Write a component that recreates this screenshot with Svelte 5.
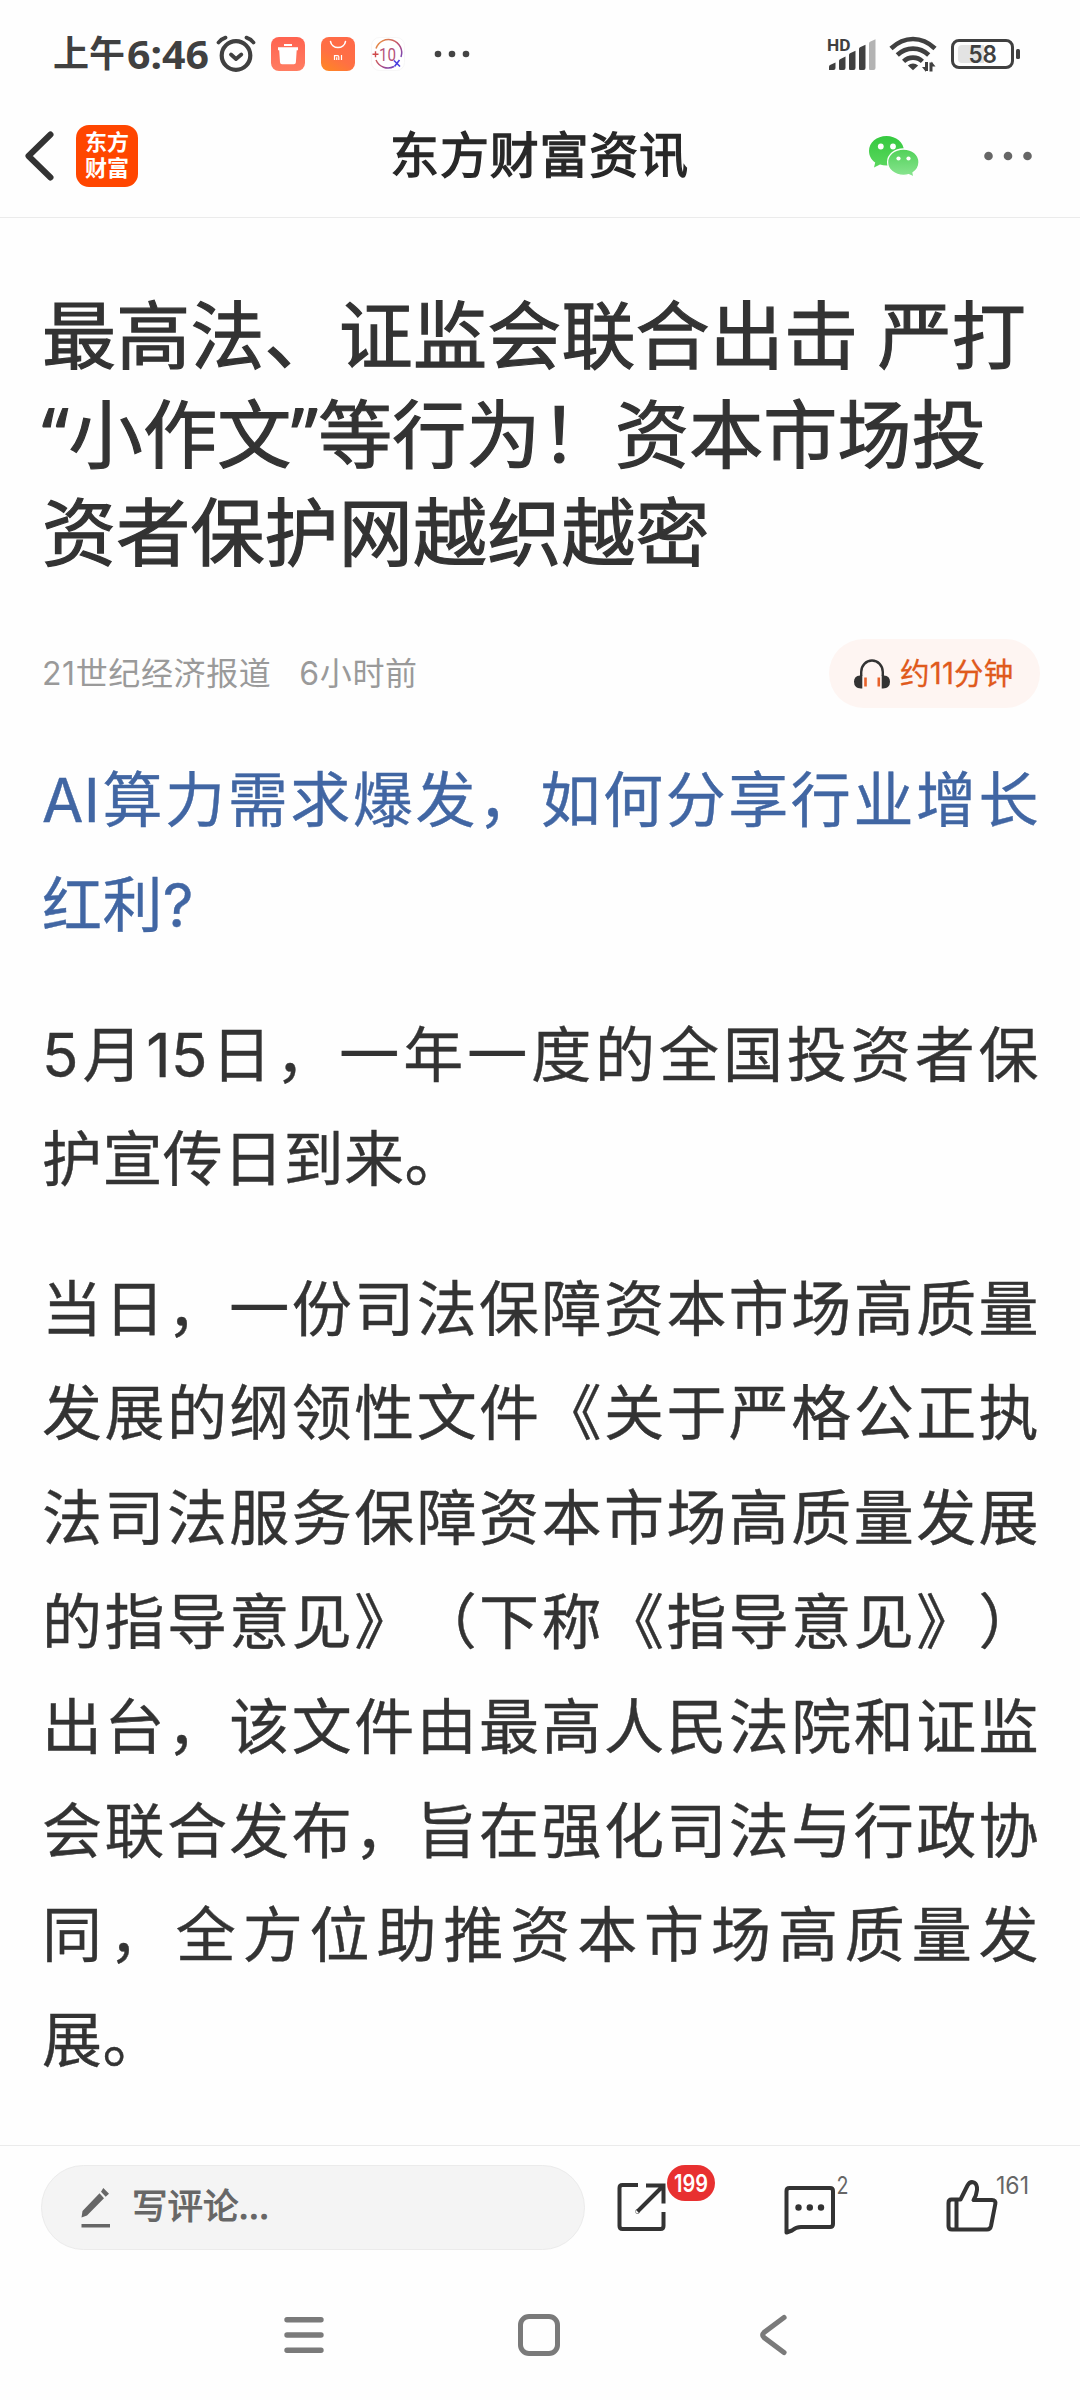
<script>
  const headline = [
    '最高法、证监会联合出击 严打',
    '“小作文”等行为！资本市场投',
    '资者保护网越织越密'
  ];

  const paragraphs = [
    { link: true, lines: ['AI算力需求爆发，如何分享行业增长', '红利?'] },
    { link: false, lines: ['5月15日，一年一度的全国投资者保', '护宣传日到来。'] },
    {
      link: false,
      lines: [
        '当日，一份司法保障资本市场高质量',
        '发展的纲领性文件《关于严格公正执',
        '法司法服务保障资本市场高质量发展',
        '的指导意见》（下称《指导意见》）',
        '出台，该文件由最高人民法院和证监',
        '会联合发布，旨在强化司法与行政协',
        '同，全方位助推资本市场高质量发',
        '展。'
      ]
    }
  ];
</script>

<div class="screen">
  <div class="status">
    <div class="status-left">
      <span class="ampm">上午</span>
      <svg class="clock" width="84" height="40" viewBox="0 0 84 40">
        <text x="0" y="34.5" textLength="82" lengthAdjust="spacingAndGlyphs">6:46</text>
      </svg>
      <svg class="alarm" width="40" height="40" viewBox="0 0 40 40" fill="none" stroke="#404040" stroke-linecap="round" stroke-linejoin="round">
        <circle cx="20" cy="21.5" r="14.3" stroke-width="4.2" />
        <path d="M2.5 8.5 Q5 5 9.5 3.6M37.5 8.5 Q35 5 30.5 3.6" stroke-width="3.8" />
        <path d="M15 20.5l5 4.5 5.3-4.5" stroke-width="3.8" />
      </svg>
      <svg class="app" width="34" height="34" viewBox="0 0 34 34">
        <defs>
          <linearGradient id="trash" x1="0" y1="0" x2="0" y2="1"><stop offset="0" stop-color="#ff6350" /><stop offset="1" stop-color="#ff7d62" /></linearGradient>
        </defs>
        <rect width="34" height="34" rx="8" fill="url(#trash)" />
        <path d="M13 7h8v2h-8zM7 10.3h20v3h-1.300l-.8 12q-.1 2-2 2H11q-1.900 0-2-2l-.8-12H7z" fill="#fff" />
      </svg>
      <svg class="app" width="34" height="34" viewBox="0 0 34 34">
        <defs>
          <linearGradient id="store" x1="0" y1="1" x2=".6" y2="0"><stop offset="0" stop-color="#ff8a1f" /><stop offset=".5" stop-color="#ff7043" /><stop offset="1" stop-color="#ff6a48" /></linearGradient>
        </defs>
        <rect width="34" height="34" rx="8" fill="url(#store)" />
        <path d="M9.500 4.500a7.600 7.300 0 0 0 15 0" fill="none" stroke="#fff" stroke-width="1.500" stroke-linecap="round" />
        <path d="M13.500 23v-4.300h3q1.300 0 1.300 1.300v3M15.700 20.300v2.700M20.500 18v5" fill="none" stroke="#fff" stroke-width="1.200" />
      </svg>
      <svg class="app" width="34" height="34" viewBox="0 0 34 34">
        <defs>
          <linearGradient id="ring" x1="0" y1="0" x2="1" y2="1"><stop offset="0" stop-color="#ef9a3d" /><stop offset=".5" stop-color="#c0506f" /><stop offset="1" stop-color="#4a3fe0" /></linearGradient>
        </defs>
        <rect x=".5" y=".5" width="33" height="33" rx="8" fill="#fff" stroke="#f7f7f7" />
        <path d="M5 11.500A13 13 0 0 1 30 20M5 23A13 13 0 0 0 23 29.500" fill="none" stroke="url(#ring)" stroke-width="1.500" />
        <path d="M1.500 17.300h6M4.500 14.300v6" stroke="#cf4a4a" stroke-width="1.400" />
        <text class="ten" x="8" y="24" textLength="17" lengthAdjust="spacingAndGlyphs">10</text>
        <path d="M23 23.500l6 6M28.500 23l-5 6.500" stroke="#4a3fe0" stroke-width="1.600" />
      </svg>
      <svg class="more-notes" width="36" height="8" viewBox="0 0 36 8" fill="#444">
        <circle cx="4" cy="4" r="3.300" /><circle cx="18" cy="4" r="3.300" /><circle cx="32" cy="4" r="3.300" />
      </svg>
    </div>
    <div class="status-right">
      <svg width="50" height="36" viewBox="0 0 50 36" fill="#404040">
        <text class="hd" x="0" y="14.500" textLength="23.500" lengthAdjust="spacingAndGlyphs">HD</text>
        <path d="M2 34v-3.500q0-1 1-1.600L8.500 26.500V32q0 2-2 2z" />
        <path d="M13 34q-1 0-1-1.500V25q0-1 1-1.800L18.500 20.500V32q0 2-2 2z" />
        <path d="M23 34q-1 0-1-1.500V19q0-1 1-1.800L28.500 14.800V32q0 2-2 2z" />
        <path d="M33 34q-1 0-1-1.500V13q0-1 1-1.800L38.500 8.800V32q0 2-2 2z" />
        <path d="M43 34q-1 0-1-1.500V7.500q0-1 1-1.800L48.500 3.300V32q0 2-2 2z" fill="#b3b3b3" />
      </svg>
      <svg class="wifi" width="48" height="38" viewBox="0 0 48 38" fill="none" stroke="#404040" stroke-width="4.600">
        <path d="M2 13.500Q12 4 24 4T46 13.500M8.300 20Q15 13.600 24 13.600T39.700 20M14.600 26.300Q18.500 22.600 24 22.600T33.400 26.300" />
        <path d="M18.800 30.500q5.200-4 10.400 0L24 35.200z" fill="#404040" stroke="none" />
        <path d="M37.500 27v9M42 36.500v-9" stroke-width="3" />
        <path d="M33 32h4v5zM46.500 31.500h-4v-5z" fill="#404040" stroke="none" />
      </svg>
      <svg class="battery" width="70" height="32" viewBox="0 0 70 32">
        <path d="M11 7h22v18H11q-4 0-4-4V11q0-4 4-4z" fill="#e3e3e3" />
        <rect x="1.500" y="2.500" width="60" height="27" rx="6.500" fill="none" stroke="#404040" stroke-width="3" />
        <rect x="65" y="11" width="4" height="10" rx="1.500" fill="#404040" />
        <text class="charge" x="17.500" y="25" textLength="28.500" lengthAdjust="spacingAndGlyphs">58</text>
      </svg>
    </div>
  </div>

  <header>
    <div class="head-left">
      <svg width="34" height="54" viewBox="0 0 34 54" fill="none" stroke="#333" stroke-width="6" stroke-linecap="round" stroke-linejoin="round">
        <path d="M28.500 5.500L6.500 27l22 21.500" />
      </svg>
      <div class="logo"><span>东方</span><span>财富</span></div>
    </div>
    <div class="head-title">东方财富资讯</div>
    <div class="head-right">
      <svg width="52" height="42" viewBox="0 0 52 42">
        <defs>
          <linearGradient id="bubbleA" x1="0" y1="0" x2="0" y2="1"><stop offset="0" stop-color="#35c93f" /><stop offset="1" stop-color="#5bd75f" /></linearGradient>
          <linearGradient id="bubbleB" x1="0" y1="0" x2="0" y2="1"><stop offset="0" stop-color="#50d158" /><stop offset="1" stop-color="#8be592" /></linearGradient>
        </defs>
        <path d="M18.500 1C8.700 1 1 7.400 1 16c0 4.800 2.400 8.700 6.200 11.500L6 32.500l6-3q3 1 6.500 1C28 30.500 36 24.500 36 16S28 1 18.500 1z" fill="url(#bubbleA)" />
        <path d="M35.500 14C26.500 14 19.600 19.800 19.600 27.200S26.500 40.400 35.500 40.400q3 0 5.300-.7L46 42l-1-4.300c3.700-2.500 6-6.200 6-10.500C51 19.800 44.500 14 35.500 14z" fill="url(#bubbleB)" stroke="#fff" stroke-width="1.300" />
        <g fill="#fff">
          <circle cx="12.800" cy="11.500" r="2.900" /><circle cx="25" cy="11.500" r="2.900" />
          <circle cx="30.500" cy="23.500" r="2.100" /><circle cx="40.500" cy="23.500" r="2.100" />
        </g>
      </svg>
      <svg class="head-more" width="48" height="10" viewBox="0 0 48 10" fill="#666">
        <circle cx="4.500" cy="5" r="4.300" /><circle cx="24" cy="5" r="4.300" /><circle cx="43.500" cy="5" r="4.300" />
      </svg>
    </div>
  </header>

  <main>
    <h1>
      {#each headline as line}
        <span>{line}</span>
      {/each}
    </h1>

    <div class="meta">
      <span class="source">21世纪经济报道</span>
      <span class="time">6小时前</span>
      <div class="listen">
        <svg width="36" height="30" viewBox="0 0 36 30">
          <path d="M7.200 17V13a10.800 11.500 0 0 1 21.600 0V17" fill="none" stroke="#333" stroke-width="2.400" />
          <path d="M8.300 16.500v13H7Q0 29 0 22.700 0 17 6 16.500zM27.700 16.500v13H29q7-.5 7-6.800 0-5.700-6-6.200z" fill="#333" />
          <path d="M11.500 18.500v9M24.800 18.500v9" stroke="#e8622a" stroke-width="2.600" />
        </svg>
        <span>约11分钟</span>
      </div>
    </div>

    {#each paragraphs as paragraph}
      <p class:link={paragraph.link}>
        {#each paragraph.lines as line, i}
          <span class:full={i < paragraph.lines.length - 1}>{line}</span>
        {/each}
      </p>
    {/each}
  </main>

  <footer>
    <div class="comment-box">
      <svg width="30" height="42" viewBox="0 0 30 42" fill="#666">
        <path d="M.5 30.500L1.500 24 18.500 6.200l4.500 5L6 28.500zM20 4.700L22.300 1l5.700 5.700-3.300 3z" />
        <rect x=".5" y="37" width="28.500" height="3.500" />
      </svg>
      <span>写评论...</span>
    </div>
    <div class="action share">
      <svg width="50" height="50" viewBox="0 0 50 50" fill="none" stroke="#333" stroke-width="4">
        <path d="M21 3H5.500Q2.500 3 2.500 6v38q0 3 3 3h38q3 0 3-3V30" />
        <path d="M29 3.500h17.500V21.500M45 5L20.500 29.500" />
        <circle cx="20.500" cy="29.500" r=".2" stroke-linecap="round" />
      </svg>
      <div class="badge">
        <svg width="34" height="20" viewBox="0 0 34 20"><text x="0" y="19" textLength="34" lengthAdjust="spacingAndGlyphs">199</text></svg>
      </div>
    </div>
    <div class="action replies">
      <svg width="52" height="50" viewBox="0 0 52 50" fill="none" stroke="#333" stroke-width="4" stroke-linejoin="round">
        <path d="M5.500 3h40.500Q49 3 49 6v33q0 3-3 3H17Q12 42 8 45.500L2.500 47.500V6q0-3 3-3z" />
        <g fill="#333" stroke="none"><circle cx="14.500" cy="22.500" r="3.200" /><circle cx="25.800" cy="22.500" r="3.200" /><circle cx="37" cy="22.500" r="3.200" /></g>
      </svg>
      <svg class="count" width="11" height="20" viewBox="0 0 11 20"><text x="-.5" y="19" textLength="12" lengthAdjust="spacingAndGlyphs">2</text></svg>
    </div>
    <div class="action likes">
      <svg width="52" height="54" viewBox="0 0 52 54" fill="none" stroke="#333" stroke-width="4" stroke-linejoin="round">
        <path d="M5.500 20.500h9L21.500 6.500Q24 2 28 3.500 31.500 5.500 31 11q-.5 5.500-3.500 10H46Q50 21 49.300 25L45 47q-.8 3.500-4 3.500H6Q2.500 50.500 2.500 47V24q0-3.500 3-3.500zM10.500 20.500v30" />
      </svg>
      <svg class="count" width="32" height="20" viewBox="0 0 32 20"><text x="-2" y="19" textLength="33" lengthAdjust="spacingAndGlyphs">161</text></svg>
    </div>
  </footer>

  <nav>
    <svg width="42" height="44" viewBox="0 0 42 44" fill="none" stroke="#7a7a7a" stroke-width="5.400" stroke-linecap="round">
      <path d="M4 6.700h34M4 22h34M4 37.300h34" />
    </svg>
    <svg class="home" width="44" height="44" viewBox="0 0 44 44" fill="none" stroke="#7a7a7a" stroke-width="5">
      <rect x="3.500" y="3.500" width="37" height="37" rx="8.500" />
    </svg>
    <svg class="back" width="30" height="44" viewBox="0 0 30 44" fill="none" stroke="#7a7a7a" stroke-width="5.200" stroke-linecap="round">
      <path d="M26 4.500L6 19.500q-2.600 2.500 0 5L26 39.500" />
    </svg>
  </nav>
</div>

<style>
  :global(body) {
    margin: 0;
    background: #fefefe;
  }

  .screen {
    width: 1080px;
    height: 2400px;
    overflow: hidden;
    display: flex;
    flex-direction: column;
    background: #fefefe;
    font-family: Inter, 'Noto Sans CJK SC', sans-serif;
    color: #333;
    text-spacing-trim: space-all;
  }

  svg {
    display: block;
    flex: none;
    overflow: visible;
  }

  .status {
    height: 108px;
    box-sizing: border-box;
    padding: 0 59px 0 53px;
    display: flex;
    align-items: center;
    justify-content: space-between;
    flex: none;
  }

  .status-left,
  .status-right {
    display: flex;
    align-items: center;
  }

  .ampm {
    width: 74px;
    font-size: 36px;
    line-height: 40px;
    font-weight: 700;
    color: #404040;
    white-space: nowrap;
  }

  .clock text {
    font: 700 40px 'Noto Sans', sans-serif;
    fill: #404040;
  }

  .alarm {
    margin-left: 5px;
  }

  .app {
    margin-left: 16px;
  }

  .alarm + .app {
    margin-left: 15px;
  }

  .ten {
    font: 400 18px Roboto, sans-serif;
    fill: #b5527a;
  }

  .more-notes {
    margin-left: 29px;
  }

  .hd {
    font: 700 17px Roboto, sans-serif;
  }

  .wifi {
    margin-left: 12px;
  }

  .battery {
    margin-left: 14px;
  }

  .charge {
    font: 600 24px Inter, sans-serif;
    fill: #404040;
  }

  header {
    height: 110px;
    box-sizing: border-box;
    padding: 0 48px 14px 22px;
    border-bottom: 1px solid #ebebeb;
    display: grid;
    grid-template-columns: 1fr auto 1fr;
    align-items: center;
    flex: none;
  }

  .head-left,
  .head-right {
    display: flex;
    align-items: center;
  }

  .head-left {
    gap: 20px;
  }

  .head-right {
    justify-content: flex-end;
  }

  .head-more {
    margin-left: 64px;
  }

  .logo {
    width: 62px;
    height: 62px;
    border-radius: 13px;
    background: #ff4600;
    color: #fff;
    font-size: 22px;
    font-weight: 700;
    line-height: 26px;
    padding-bottom: 1px;
    box-sizing: border-box;
    display: flex;
    flex-direction: column;
    align-items: center;
    justify-content: center;
  }

  .head-title {
    padding-left: 25px;
    font-size: 49px;
    letter-spacing: 0.8px;
    line-height: 60px;
    color: #282828;
    -webkit-text-stroke: 1.4px #282828;
  }

  main {
    flex: 1;
    box-sizing: border-box;
    padding: 68px 40px 0 42px;
    overflow: hidden;
  }

  h1 {
    margin: 0;
    font-family: 'Noto Sans', 'Noto Sans CJK SC', sans-serif;
    font-size: 74px;
    font-weight: 400;
    line-height: 98.7px;
    letter-spacing: 0.2px;
    -webkit-text-stroke: 1.2px #333;
  }

  h1 span,
  p span {
    display: block;
    white-space: nowrap;
  }

  .meta {
    height: 69px;
    margin-top: 57px;
    display: flex;
    align-items: center;
    font-size: 32px;
    letter-spacing: 0.6px;
    color: #9a9a9a;
  }

  .source,
  .time {
    padding-bottom: 6px;
  }

  .time {
    margin-left: 28px;
  }

  .listen {
    width: 211px;
    height: 69px;
    box-sizing: border-box;
    padding-left: 25px;
    margin-left: auto;
    border-radius: 35px;
    background: #fef5f2;
    display: flex;
    align-items: center;
    gap: 10px;
    font-size: 29.500px;
    letter-spacing: 0.2px;
    color: #e05a1c;
    white-space: nowrap;
    -webkit-text-stroke: 0.3px #e05a1c;
  }

  .listen span {
    padding-bottom: 5px;
  }

  p {
    width: 997px;
    margin: 0 0 45.6px;
    font-size: 60px;
    line-height: 104.400px;
    letter-spacing: 0.4px;
    -webkit-text-stroke: 0.4px currentColor;
  }

  .meta + p {
    margin-top: 40px;
  }

  .link {
    color: #4166a3;
  }

  .full {
    white-space: normal;
    text-align: justify;
    text-align-last: justify;
  }

  footer {
    height: 125px;
    box-sizing: border-box;
    border-top: 1px solid #ebebeb;
    padding: 19px 0 0 41px;
    display: flex;
    align-items: flex-start;
    flex: none;
  }

  .comment-box {
    width: 544px;
    height: 85px;
    box-sizing: border-box;
    padding-left: 39px;
    border: 1px solid #ebebeb;
    border-radius: 43px;
    background: #f4f4f4;
    display: flex;
    align-items: center;
    gap: 21px;
    font-size: 35.500px;
    color: #666;
    -webkit-text-stroke: 1px #666;
    flex: none;
  }

  .comment-box span {
    padding-bottom: 8px;
  }

  .action {
    display: flex;
    align-items: flex-start;
    flex: none;
  }

  .share {
    width: 99px;
    padding-top: 17px;
    margin-left: 32px;
  }

  .badge {
    width: 48px;
    height: 36px;
    margin-top: -17px;
    border-radius: 18px;
    background: #e83030;
    display: flex;
    align-items: center;
    justify-content: center;
    flex: none;
  }

  .badge text {
    font: 600 24px Inter, sans-serif;
    fill: #fff;
  }

  .count text {
    font: 400 24.500px Inter, sans-serif;
    fill: #666;
  }

  .replies {
    padding-top: 20px;
    margin-left: 68px;
  }

  .replies .count {
    margin: -10px 0 0 1px;
  }

  .likes {
    padding-top: 14px;
    margin-left: 98px;
  }

  .likes .count {
    margin-top: -4px;
  }

  nav {
    height: 130px;
    box-sizing: border-box;
    padding: 43px 0 0 283px;
    display: flex;
    flex: none;
  }

  .home {
    margin-left: 192px;
  }

  .back {
    margin-left: 197px;
  }
</style>
